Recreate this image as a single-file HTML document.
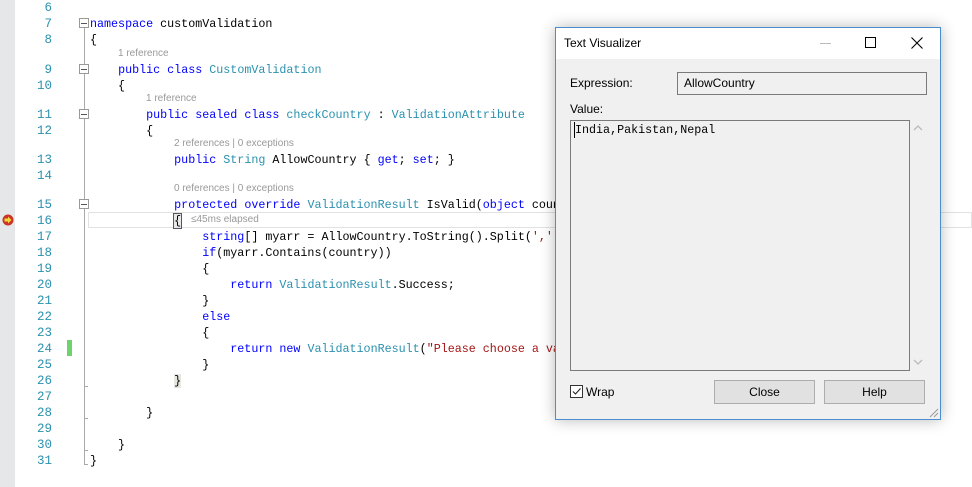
<!DOCTYPE html>
<html><head><meta charset="utf-8"><style>
*{margin:0;padding:0;box-sizing:border-box}
body{width:972px;height:487px;background:#fff;position:relative;overflow:hidden;font-family:"Liberation Mono",monospace}
.gut{position:absolute;left:0;top:0;width:15px;height:487px;background:#e6e7e8}
.ln{position:absolute;left:20px;width:32px;text-align:right;color:#2b91af;font-size:12.5px;line-height:16px;height:16px;margin-top:1px}
.c{position:absolute;font-size:11.7px;line-height:16px;height:16px;white-space:pre;color:#000;margin-top:1px}
.lens{position:absolute;font-family:"Liberation Sans",sans-serif;font-size:10px;color:#999;line-height:12px;white-space:pre}
.k{color:#0000ff}.t{color:#2b91af}.s{color:#a31515}
.fold{position:absolute;left:79px;width:10px;height:10px;border:1px solid #999;background:#fff}
.fold:after{content:"";position:absolute;left:1px;top:3.5px;width:6px;height:1px;background:#555}
.vl{position:absolute;width:1px;background:#aaa}
.ui{font-family:"Liberation Sans",sans-serif;font-size:12px;color:#000;position:absolute}
</style></head><body>
<div class="gut"></div>
<svg style="position:absolute;left:2px;top:214px" width="12" height="12"><circle cx="6" cy="6" r="5.5" fill="#c9342a"/><path d="M2.5 4.5h3.5v-2l3.5 3.5-3.5 3.5v-2h-3.5z" fill="#f5d538"/></svg>

<div class="ln" style="top:-1px">6</div>
<div class="ln" style="top:15px">7</div>
<div class="ln" style="top:31px">8</div>
<div class="ln" style="top:61px">9</div>
<div class="ln" style="top:77px">10</div>
<div class="ln" style="top:106px">11</div>
<div class="ln" style="top:122px">12</div>
<div class="ln" style="top:151px">13</div>
<div class="ln" style="top:167px">14</div>
<div class="ln" style="top:196px">15</div>
<div class="ln" style="top:212px">16</div>
<div class="ln" style="top:228px">17</div>
<div class="ln" style="top:244px">18</div>
<div class="ln" style="top:260px">19</div>
<div class="ln" style="top:276px">20</div>
<div class="ln" style="top:292px">21</div>
<div class="ln" style="top:308px">22</div>
<div class="ln" style="top:324px">23</div>
<div class="ln" style="top:340px">24</div>
<div class="ln" style="top:356px">25</div>
<div class="ln" style="top:372px">26</div>
<div class="ln" style="top:388px">27</div>
<div class="ln" style="top:404px">28</div>
<div class="ln" style="top:420px">29</div>
<div class="ln" style="top:436px">30</div>
<div class="ln" style="top:452px">31</div>

<div style="position:absolute;left:67px;top:340px;width:5px;height:16px;background:#6ed36e"></div>

<div class="vl" style="left:84px;top:28px;height:437px"></div>
<div style="position:absolute;left:84px;top:464px;width:4px;height:1px;background:#aaa"></div>
<div style="position:absolute;left:84px;top:386px;width:4px;height:1px;background:#aaa"></div>
<div style="position:absolute;left:84px;top:418px;width:4px;height:1px;background:#aaa"></div>
<div style="position:absolute;left:84px;top:450px;width:4px;height:1px;background:#aaa"></div>
<div class="fold" style="top:18px"></div>
<div class="fold" style="top:64px"></div>
<div class="fold" style="top:109px"></div>
<div class="fold" style="top:199px"></div>

<div style="position:absolute;left:88px;top:212px;width:884px;height:16px;border:1px solid #e2e2e2"></div>

<div class="c" style="left:90px;top:15px"><span class="k">namespace</span> customValidation</div>
<div class="c" style="left:90px;top:31px">{</div>
<div class="lens" style="left:118px;top:48px">1 reference</div>
<div class="c" style="left:90px;top:61px">    <span class="k">public</span> <span class="k">class</span> <span class="t">CustomValidation</span></div>
<div class="c" style="left:90px;top:77px">    {</div>
<div class="lens" style="left:146px;top:93px">1 reference</div>
<div class="c" style="left:90px;top:106px">        <span class="k">public</span> <span class="k">sealed</span> <span class="k">class</span> <span class="t">checkCountry</span> : <span class="t">ValidationAttribute</span></div>
<div class="c" style="left:90px;top:122px">        {</div>
<div class="lens" style="left:174px;top:138px">2 references | 0 exceptions</div>
<div class="c" style="left:90px;top:151px">            <span class="k">public</span> <span class="t">String</span> AllowCountry { <span class="k">get</span>; <span class="k">set</span>; }</div>
<div class="lens" style="left:174px;top:183px">0 references | 0 exceptions</div>
<div class="c" style="left:90px;top:196px">            <span class="k">protected</span> <span class="k">override</span> <span class="t">ValidationResult</span> IsValid(<span class="k">object</span> country)</div>
<div class="c" style="left:90px;top:212px">            <span style="outline:1px solid #556;background:#e8e8e8">{</span></div>
<div class="lens" style="left:191px;top:214px">≤45ms elapsed</div>
<div class="c" style="left:90px;top:228px">                <span class="k">string</span>[] myarr = AllowCountry.ToString().Split(<span class="s">','</span>);</div>
<div class="c" style="left:90px;top:244px">                <span class="k">if</span>(myarr.Contains(country))</div>
<div class="c" style="left:90px;top:260px">                {</div>
<div class="c" style="left:90px;top:276px">                    <span class="k">return</span> <span class="t">ValidationResult</span>.Success;</div>
<div class="c" style="left:90px;top:292px">                }</div>
<div class="c" style="left:90px;top:308px">                <span class="k">else</span></div>
<div class="c" style="left:90px;top:324px">                {</div>
<div class="c" style="left:90px;top:340px">                    <span class="k">return</span> <span class="k">new</span> <span class="t">ValidationResult</span>(<span class="s">"Please choose a valid country"</span>);</div>
<div class="c" style="left:90px;top:356px">                }</div>
<div class="c" style="left:90px;top:372px">            <span style="background:#e6e6e0">}</span></div>
<div class="c" style="left:90px;top:404px">        }</div>
<div class="c" style="left:90px;top:436px">    }</div>
<div class="c" style="left:90px;top:452px">}</div>

<!-- dialog -->
<div style="position:absolute;left:555px;top:27px;width:386px;height:393px;background:#f0f0f0;border:1px solid #4a8ed0;box-shadow:0 0 14px rgba(0,0,0,.28)">
  <div style="position:absolute;left:0;top:0;width:384px;height:31px;background:#fff"></div>
  <div class="ui" style="left:8px;top:8px">Text Visualizer</div>
  <div style="position:absolute;left:264px;top:15px;width:11px;height:1px;background:#bbb"></div>
  <div style="position:absolute;left:309px;top:9px;width:11px;height:11px;border:1px solid #000"></div>
  <svg style="position:absolute;left:355px;top:9px" width="12" height="12"><path d="M0.5 0.5L11.5 11.5M11.5 0.5L0.5 11.5" stroke="#000" stroke-width="1.1"/></svg>
  <div class="ui" style="left:14px;top:48px">Expression:</div>
  <div style="position:absolute;left:121px;top:44px;width:250px;height:23px;border:1px solid #7a7a7a;background:#f0f0f0"></div>
  <div class="ui" style="left:128px;top:48px">AllowCountry</div>
  <div class="ui" style="left:14px;top:74px">Value:</div>
  <div style="position:absolute;left:14px;top:92px;width:340px;height:251px;border:1px solid #7a7a7a;background:#f0f0f0"></div>
  <div style="position:absolute;left:18px;top:94px;font-size:11.7px;line-height:16px;font-family:'Liberation Mono',monospace;border-left:1px solid #000;padding-left:0">India,Pakistan,Nepal</div>
  <svg style="position:absolute;left:357px;top:96px" width="10" height="8"><path d="M1 6L5 2L9 6" stroke="#bbb" fill="none" stroke-width="1.3"/></svg>
  <svg style="position:absolute;left:357px;top:330px" width="10" height="8"><path d="M1 2L5 6L9 2" stroke="#bbb" fill="none" stroke-width="1.3"/></svg>
  <div style="position:absolute;left:14px;top:357px;width:13px;height:13px;border:1px solid #333;background:#fff"></div>
  <svg style="position:absolute;left:15px;top:358px" width="11" height="11"><path d="M2 5.5L4.5 8L9.5 2.5" stroke="#222" fill="none" stroke-width="1.1"/></svg>
  <div class="ui" style="left:30px;top:357px">Wrap</div>
  <div style="position:absolute;left:158px;top:352px;width:101px;height:24px;border:1px solid #adadad;background:#e1e1e1"></div>
  <div class="ui" style="left:158px;top:357px;width:101px;text-align:center">Close</div>
  <div style="position:absolute;left:268px;top:352px;width:101px;height:24px;border:1px solid #adadad;background:#e1e1e1"></div>
  <div class="ui" style="left:268px;top:357px;width:101px;text-align:center">Help</div>
  <svg style="position:absolute;left:371px;top:378px" width="12" height="12"><path d="M11 3L3 11M11 7L7 11" stroke="#999" stroke-width="1"/></svg>
</div>
</body></html>
